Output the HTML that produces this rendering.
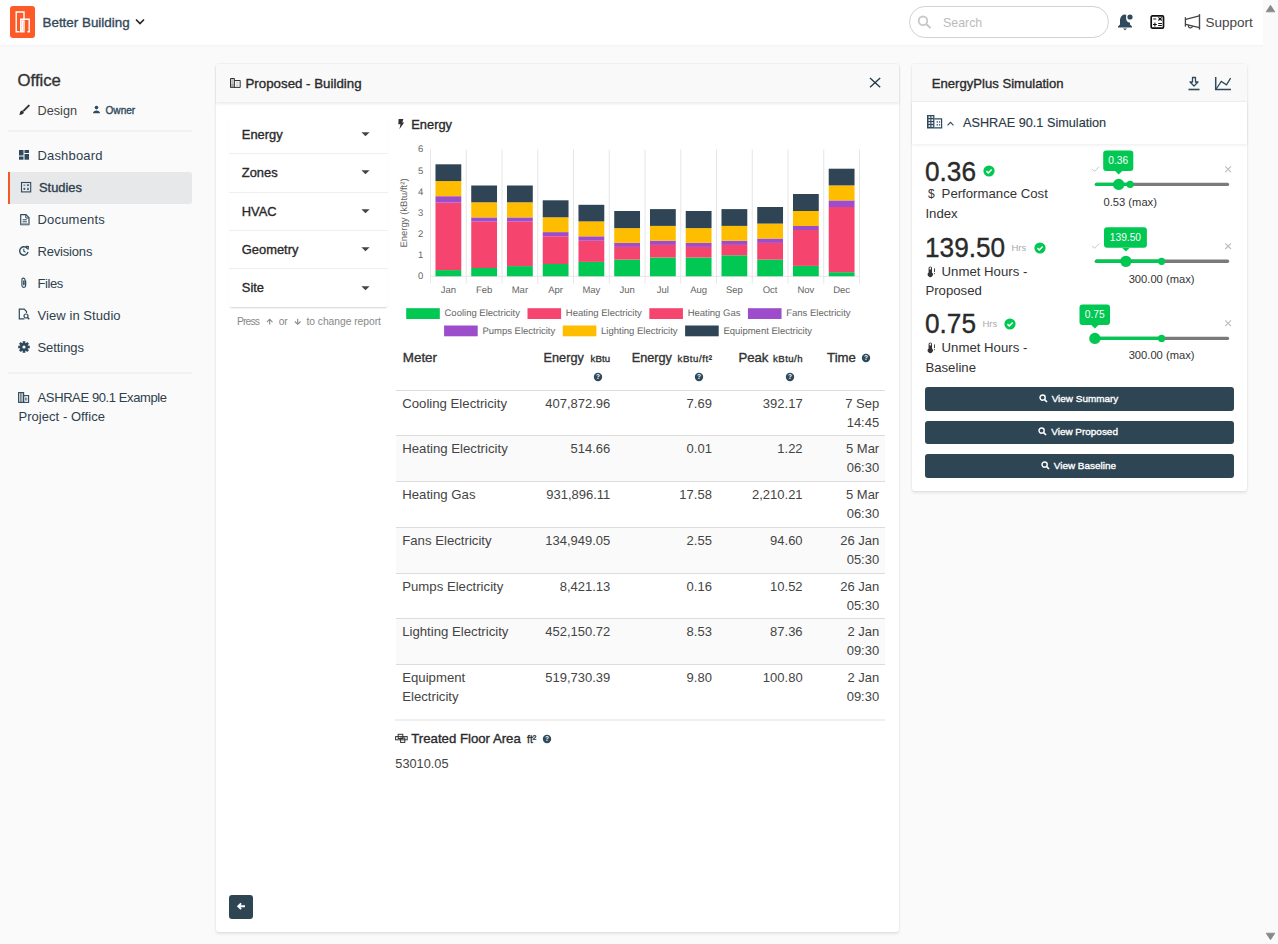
<!DOCTYPE html><html><head><meta charset="utf-8"><style>
*{margin:0;padding:0;box-sizing:border-box}
html,body{width:1278px;height:944px;overflow:hidden;background:#fafafa;font-family:"Liberation Sans",sans-serif;}
.t{position:absolute;white-space:nowrap}
.a{position:absolute}
svg{position:absolute;overflow:visible}
</style></head><body>
<div class="a" style="left:0;top:0;width:1263px;height:45px;background:#fff;box-shadow:0 1px 2px rgba(0,0,0,0.04)"></div>
<div class="a" style="left:10px;top:6px;width:25px;height:32px;background:#fd5a28;border-radius:3px"></div>
<svg style="left:0;top:0" width="40" height="40"><g fill="none" stroke="#fff" stroke-width="1.4"><path d="M19.5 31.8H16.2V12H24V19"/><path d="M27.5 31.8H29.2V19.2H20.7V31.8H24V21H22.3V31.8"/></g></svg>
<div class="t" style="top:15.00px;font-size:13.4px;line-height:15px;color:#33495a;-webkit-text-stroke:0.35px #33495a;left:42.5px;">Better Building</div>
<svg style="left:135px;top:18px" width="10" height="8"><path d="M1 1.5L5 5.5L9 1.5" fill="none" stroke="#222" stroke-width="1.6"/></svg>
<div class="a" style="left:909px;top:6px;width:200px;height:32px;border:1px solid #d2d2d2;border-radius:16px;background:#fff"></div>
<svg style="left:917px;top:15px" width="16" height="14"><circle cx="6" cy="5.8" r="4.3" fill="none" stroke="#c8c8c8" stroke-width="1.8"/><path d="M9.2 9L13.5 13" stroke="#c8c8c8" stroke-width="2"/></svg>
<div class="t" style="top:16.00px;font-size:12.4px;line-height:14px;color:#bbbbbb;left:943px;">Search</div>
<svg style="left:1117px;top:13px" width="18" height="19"><path d="M7.5 1.5C4.3 2 3 4.8 3 8V11.5L1 13.5V14.5H15V13.5L13 11.5V9.5C10 9.5 8.5 7 9.3 2C8.8 1.6 8.2 1.4 7.5 1.5Z" fill="#2e4a5c"/><circle cx="13" cy="4" r="2.6" fill="#2e4a5c"/><path d="M6 15.5H10L8 17.2Z" fill="#2e4a5c"/></svg>
<svg style="left:1149px;top:14px" width="17" height="16"><rect x="2.2" y="1.9" width="12.3" height="12.2" rx="1.2" fill="none" stroke="#111" stroke-width="1.7"/><path d="M4.3 4.9H7.2M9.4 3.3L12.8 6.5M12.8 3.3L9.4 6.5M4 10.5H7.8M5.9 8.4V12.4M9.2 9.5H12.9M9.2 11.5H12.9" stroke="#111" stroke-width="1.05"/><rect x="10.3" y="4.2" width="1.6" height="1.6" fill="#111"/></svg>
<svg style="left:1183px;top:13px" width="19" height="19"><path d="M2.4 4.2V13.6" stroke="#444" stroke-width="1.3"/><path d="M16.5 1.1V16.6" stroke="#444" stroke-width="1.4"/><path d="M2.8 6.4L16.3 2.9M2.8 11.3L16.3 14.6" stroke="#444" stroke-width="1.2"/><path d="M5.4 12.2A2.1 2.1 0 1 0 9.6 13.2" fill="none" stroke="#444" stroke-width="1.2"/></svg>
<div class="t" style="top:15.00px;font-size:13.5px;line-height:16px;color:#444;left:1205.5px;">Support</div>
<div class="a" style="left:1263px;top:0;width:15px;height:944px;background:#fafafa"></div>
<svg style="left:1263px;top:0" width="15" height="944"><path d="M7.5 5.3L11.8 11.8H3.2Z" fill="#888" stroke="#888" stroke-width="0.8" stroke-linejoin="round"/><path d="M7.5 939.7L11.8 933.2H3.2Z" fill="#888" stroke="#888" stroke-width="0.8" stroke-linejoin="round"/></svg>
<div class="t" style="top:71.00px;font-size:16.7px;line-height:19px;color:#333;-webkit-text-stroke:0.35px #333;left:17.6px;">Office</div>
<svg style="left:18px;top:104px" width="12" height="12"><path d="M10.8 1.6L6 6.4" stroke="#333" stroke-width="2" stroke-linecap="round"/><path d="M4.7 6.6C3 6.4 2.2 7.6 2 8.6C1.9 9.6 1.5 10.4 1.2 10.8C2.6 10.9 4.6 10.6 5.4 9.6C6 8.8 6 7.4 4.7 6.6Z" fill="#333"/></svg>
<div class="t" style="top:104.00px;font-size:12.7px;line-height:15px;color:#444;left:37.5px;">Design</div>
<svg style="left:92px;top:105px" width="9" height="9"><circle cx="4.5" cy="2.6" r="1.8" fill="#2e4a5c"/><path d="M1 8.2C1 6.2 2.8 5.4 4.5 5.4S8 6.2 8 8.2Z" fill="#2e4a5c"/></svg>
<div class="t" style="top:105.00px;font-size:10.1px;line-height:12px;color:#2e4a5c;-webkit-text-stroke:0.35px #2e4a5c;left:105.5px;">Owner</div>
<div class="a" style="left:8px;top:130px;width:184px;height:2px;background:#f1f1f1"></div>
<div class="a" style="left:8px;top:172px;width:184px;height:32px;background:#e7e8ea;border-radius:0 3px 3px 0;border-left:2.5px solid #f15a24"></div>
<div class="t" style="top:148.00px;font-size:13.0px;line-height:15px;color:#2e3f4d;letter-spacing:0.163px;left:37.5px;">Dashboard</div>
<div class="t" style="top:180.00px;font-size:12.9px;line-height:15px;color:#2e3f4d;-webkit-text-stroke:0.35px #2e3f4d;letter-spacing:-0.005px;left:39px;">Studies</div>
<div class="t" style="top:212.00px;font-size:13.0px;line-height:15px;color:#2e3f4d;letter-spacing:0.194px;left:37.5px;">Documents</div>
<div class="t" style="top:244.00px;font-size:13.0px;line-height:15px;color:#2e3f4d;letter-spacing:-0.182px;left:37.5px;">Revisions</div>
<div class="t" style="top:276.00px;font-size:13.0px;line-height:15px;color:#2e3f4d;letter-spacing:-0.437px;left:37.5px;">Files</div>
<div class="t" style="top:308.00px;font-size:13.0px;line-height:15px;color:#2e3f4d;letter-spacing:0.073px;left:37.5px;">View in Studio</div>
<div class="t" style="top:340.00px;font-size:13.0px;line-height:15px;color:#2e3f4d;letter-spacing:-0.068px;left:37.5px;">Settings</div>
<svg style="left:19px;top:150px" width="11" height="10"><rect x="0" y="0" width="4.5" height="5.5" fill="#2e4a5c"/><rect x="5.5" y="0" width="4.5" height="3" fill="#2e4a5c"/><rect x="0" y="6.5" width="4.5" height="3.2" fill="#2e4a5c"/><rect x="5.5" y="4" width="4.5" height="5.7" fill="#2e4a5c"/></svg>
<svg style="left:21px;top:182px" width="11" height="11"><rect x="0.5" y="0.5" width="9.2" height="9.4" fill="none" stroke="#2e4a5c" stroke-width="1.1"/><path d="M2.4 3.2H4.3M6 2.2L7.9 4.1M7.9 2.2L6 4.1M2.2 6.9H4.5M3.35 5.8V8M6 6.3H8M6 7.6H8" stroke="#2e4a5c" stroke-width="0.85"/></svg>
<svg style="left:19.5px;top:213.5px" width="11" height="12"><path d="M0.7 0.7H6L9 3.7V10.6H0.7Z" fill="none" stroke="#2e4a5c" stroke-width="1.2" stroke-linejoin="round"/><path d="M5.8 0.8V4H9" fill="none" stroke="#2e4a5c" stroke-width="1"/><path d="M2.6 5.8H6.8M2.6 7.8H6.8" stroke="#2e4a5c" stroke-width="1"/><rect x="0.7" y="9.2" width="8.3" height="1.5" fill="#8a98a3"/></svg>
<svg style="left:18px;top:245px" width="12" height="12"><path d="M9.6 4A4.2 4.2 0 1 0 10 7" fill="none" stroke="#2e4a5c" stroke-width="1.4"/><path d="M7.5 1.3L10.3 1.5L10 4.6" fill="none" stroke="#2e4a5c" stroke-width="1.3"/><path d="M5.8 3.8V6.3L7.5 7.3" fill="none" stroke="#2e4a5c" stroke-width="1.1"/></svg>
<svg style="left:19px;top:277px" width="10" height="12"><path d="M6.7 3.5V8.5A1.9 1.9 0 0 1 2.9 8.5V2.6A1.5 1.5 0 0 1 5.9 2.6V8.2" fill="none" stroke="#2e4a5c" stroke-width="1.1"/><path d="M4.4 3.5V8.2" stroke="#2e4a5c" stroke-width="1"/></svg>
<svg style="left:18px;top:308px" width="13" height="12"><path d="M6.5 10.8H1.3V1.2H6.2L8.5 3.5V5" fill="none" stroke="#2e4a5c" stroke-width="1.2"/><circle cx="8" cy="8" r="2" fill="none" stroke="#2e4a5c" stroke-width="1.2"/><path d="M9.5 9.5L11.3 11.3" stroke="#2e4a5c" stroke-width="1.3"/></svg>
<svg style="left:18px;top:341px" width="12" height="12"><g transform="translate(6,6)"><circle r="4" fill="#2e4a5c"/><rect x="-1.3" y="-5.8" width="2.6" height="3" fill="#2e4a5c" transform="rotate(0)"/><rect x="-1.3" y="-5.8" width="2.6" height="3" fill="#2e4a5c" transform="rotate(45)"/><rect x="-1.3" y="-5.8" width="2.6" height="3" fill="#2e4a5c" transform="rotate(90)"/><rect x="-1.3" y="-5.8" width="2.6" height="3" fill="#2e4a5c" transform="rotate(135)"/><rect x="-1.3" y="-5.8" width="2.6" height="3" fill="#2e4a5c" transform="rotate(180)"/><rect x="-1.3" y="-5.8" width="2.6" height="3" fill="#2e4a5c" transform="rotate(225)"/><rect x="-1.3" y="-5.8" width="2.6" height="3" fill="#2e4a5c" transform="rotate(270)"/><rect x="-1.3" y="-5.8" width="2.6" height="3" fill="#2e4a5c" transform="rotate(315)"/><circle r="1.6" fill="#fafafa"/></g></svg>
<div class="a" style="left:8px;top:371.5px;width:184px;height:2px;background:#f1f1f1"></div>
<svg style="left:18px;top:392px" width="12" height="11"><rect x="0.6" y="0.6" width="5" height="9.8" fill="none" stroke="#2e4a5c" stroke-width="1.1"/><path d="M2.3 1V10.5M3.9 1V10.5" stroke="#2e4a5c" stroke-width="0.8"/><rect x="5.6" y="3.6" width="5" height="6.8" fill="none" stroke="#2e4a5c" stroke-width="1.1"/><path d="M7.5 5.5V8.5M8.8 5.5V8.5" stroke="#2e4a5c" stroke-width="0.7"/></svg>
<div class="t" style="top:390.00px;font-size:13.0px;line-height:15px;color:#2e3f4d;letter-spacing:-0.398px;left:37.6px;">ASHRAE 90.1 Example</div>
<div class="t" style="top:409.00px;font-size:13.0px;line-height:15px;color:#2e3f4d;letter-spacing:0.045px;left:18.5px;">Project - Office</div>
<div class="a" style="left:216px;top:64px;width:683px;height:868px;background:#fff;border-radius:3px;box-shadow:0 0 0 1px rgba(0,0,0,0.02),0 1.5px 3px rgba(0,0,0,0.09)"></div>
<div class="a" style="left:216px;top:64px;width:683px;height:38px;background:#f9f9f9;border-radius:3px 3px 0 0;box-shadow:0 1.5px 3px rgba(0,0,0,0.08)"></div>
<svg style="left:230px;top:78px" width="12" height="11"><path d="M0.5 9.5V0.5H4.4V9.5M4.4 2.5H10.2V9.4H0.4" fill="none" stroke="#333" stroke-width="1"/><path d="M1.9 1V9.2M3 1V9.2M1 6.8H4.2M1 8.3H4.2" stroke="#777" stroke-width="0.6"/><path d="M6.2 4.2H8.5M6.2 6H8.5M6.2 7.7H8.5" stroke="#aaa" stroke-width="0.7"/></svg>
<div class="t" style="top:76.00px;font-size:13.3px;line-height:15px;color:#2a2a2a;-webkit-text-stroke:0.35px #2a2a2a;left:245.5px;">Proposed - Building</div>
<svg style="left:868px;top:76px" width="14" height="14"><path d="M2 2.1L12.2 11.2M12.2 2.1L2 11.2" stroke="#1f3a4d" stroke-width="1.35"/></svg>
<div class="a" style="left:229px;top:115px;width:159px;height:192px;background:#fff;border-radius:3px;box-shadow:0 2px 2px -1px rgba(0,0,0,0.18)"></div>
<div class="t" style="top:127.00px;font-size:12.9px;line-height:15px;color:#2a2a2a;-webkit-text-stroke:0.35px #2a2a2a;left:241.8px;">Energy</div>
<svg style="left:361px;top:131.9px" width="10" height="6"><path d="M0.4 0.3H8.6L4.5 4.3Z" fill="#444"/></svg>
<div class="t" style="top:165.00px;font-size:12.9px;line-height:15px;color:#2a2a2a;-webkit-text-stroke:0.35px #2a2a2a;left:241.8px;">Zones</div>
<svg style="left:361px;top:170.3px" width="10" height="6"><path d="M0.4 0.3H8.6L4.5 4.3Z" fill="#444"/></svg>
<div class="a" style="left:229px;top:153.1px;width:159px;height:1px;background:#efefef"></div>
<div class="t" style="top:204.00px;font-size:12.9px;line-height:15px;color:#2a2a2a;-webkit-text-stroke:0.35px #2a2a2a;left:241.8px;">HVAC</div>
<svg style="left:361px;top:208.7px" width="10" height="6"><path d="M0.4 0.3H8.6L4.5 4.3Z" fill="#444"/></svg>
<div class="a" style="left:229px;top:191.5px;width:159px;height:1px;background:#efefef"></div>
<div class="t" style="top:242.00px;font-size:12.9px;line-height:15px;color:#2a2a2a;-webkit-text-stroke:0.35px #2a2a2a;left:241.8px;">Geometry</div>
<svg style="left:361px;top:247.1px" width="10" height="6"><path d="M0.4 0.3H8.6L4.5 4.3Z" fill="#444"/></svg>
<div class="a" style="left:229px;top:229.9px;width:159px;height:1px;background:#efefef"></div>
<div class="t" style="top:280.00px;font-size:12.9px;line-height:15px;color:#2a2a2a;-webkit-text-stroke:0.35px #2a2a2a;left:241.8px;">Site</div>
<svg style="left:361px;top:285.5px" width="10" height="6"><path d="M0.4 0.3H8.6L4.5 4.3Z" fill="#444"/></svg>
<div class="a" style="left:229px;top:268.3px;width:159px;height:1px;background:#efefef"></div>
<div class="t" style="top:316.00px;font-size:10.3px;line-height:12px;color:#888;letter-spacing:-0.807px;left:236.9px;">Press</div>
<div class="t" style="top:316.00px;font-size:10.3px;line-height:12px;color:#888;letter-spacing:-0.358px;left:278.8px;">or</div>
<div class="t" style="top:316.00px;font-size:10.3px;line-height:12px;color:#888;letter-spacing:-0.027px;left:306.4px;">to change report</div>
<svg style="left:265px;top:317px" width="10" height="10"><path d="M4.7 7.6V2.4M1.9 5.1L4.7 2.2L7.5 5.1" fill="none" stroke="#888" stroke-width="1.1"/></svg>
<svg style="left:292.5px;top:317px" width="10" height="10"><path d="M4.7 1.8V7M1.9 4.5L4.7 7.3L7.5 4.5" fill="none" stroke="#888" stroke-width="1.1"/></svg>
<svg style="left:397px;top:118px" width="9" height="12"><path d="M1.6 1H6.4L5.3 4.4H7.2L2.4 11.2L3.5 6.2H1.3Z" fill="#333"/></svg>
<div class="t" style="top:117.00px;font-size:12.85px;line-height:15px;color:#2a2a2a;-webkit-text-stroke:0.35px #2a2a2a;left:411.3px;">Energy</div>
<svg style="left:0;top:0" width="1278" height="944"><line x1="430.50" y1="149.5" x2="430.50" y2="283.5" stroke="#e6e6e6" stroke-width="1"/><line x1="466.25" y1="149.5" x2="466.25" y2="283.5" stroke="#e6e6e6" stroke-width="1"/><line x1="502.00" y1="149.5" x2="502.00" y2="283.5" stroke="#e6e6e6" stroke-width="1"/><line x1="537.75" y1="149.5" x2="537.75" y2="283.5" stroke="#e6e6e6" stroke-width="1"/><line x1="573.50" y1="149.5" x2="573.50" y2="283.5" stroke="#e6e6e6" stroke-width="1"/><line x1="609.25" y1="149.5" x2="609.25" y2="283.5" stroke="#e6e6e6" stroke-width="1"/><line x1="645.00" y1="149.5" x2="645.00" y2="283.5" stroke="#e6e6e6" stroke-width="1"/><line x1="680.75" y1="149.5" x2="680.75" y2="283.5" stroke="#e6e6e6" stroke-width="1"/><line x1="716.50" y1="149.5" x2="716.50" y2="283.5" stroke="#e6e6e6" stroke-width="1"/><line x1="752.25" y1="149.5" x2="752.25" y2="283.5" stroke="#e6e6e6" stroke-width="1"/><line x1="788.00" y1="149.5" x2="788.00" y2="283.5" stroke="#e6e6e6" stroke-width="1"/><line x1="823.75" y1="149.5" x2="823.75" y2="283.5" stroke="#e6e6e6" stroke-width="1"/><line x1="859.50" y1="149.5" x2="859.50" y2="283.5" stroke="#e6e6e6" stroke-width="1"/><line x1="430.5" y1="276.3" x2="859.5" y2="276.3" stroke="#e6e6e6" stroke-width="1"/><rect x="435.48" y="270.10" width="25.8" height="6.20" fill="#00c853"/><rect x="435.48" y="202.60" width="25.8" height="67.50" fill="#f5456e"/><rect x="435.48" y="196.20" width="25.8" height="6.40" fill="#9d4ccb"/><rect x="435.48" y="181.06" width="25.8" height="15.14" fill="#ffbd00"/><rect x="435.48" y="164.30" width="25.8" height="16.76" fill="#2f4555"/><rect x="471.23" y="268.00" width="25.8" height="8.30" fill="#00c853"/><rect x="471.23" y="221.60" width="25.8" height="46.40" fill="#f5456e"/><rect x="471.23" y="217.40" width="25.8" height="4.20" fill="#9d4ccb"/><rect x="471.23" y="202.30" width="25.8" height="15.10" fill="#ffbd00"/><rect x="471.23" y="185.50" width="25.8" height="16.80" fill="#2f4555"/><rect x="506.98" y="266.10" width="25.8" height="10.20" fill="#00c853"/><rect x="506.98" y="221.60" width="25.8" height="44.50" fill="#f5456e"/><rect x="506.98" y="217.40" width="25.8" height="4.20" fill="#9d4ccb"/><rect x="506.98" y="202.30" width="25.8" height="15.10" fill="#ffbd00"/><rect x="506.98" y="185.50" width="25.8" height="16.80" fill="#2f4555"/><rect x="542.73" y="264.00" width="25.8" height="12.30" fill="#00c853"/><rect x="542.73" y="236.30" width="25.8" height="27.70" fill="#f5456e"/><rect x="542.73" y="232.10" width="25.8" height="4.20" fill="#9d4ccb"/><rect x="542.73" y="217.30" width="25.8" height="14.80" fill="#ffbd00"/><rect x="542.73" y="200.30" width="25.8" height="17.00" fill="#2f4555"/><rect x="578.48" y="261.90" width="25.8" height="14.40" fill="#00c853"/><rect x="578.48" y="240.70" width="25.8" height="21.20" fill="#f5456e"/><rect x="578.48" y="236.30" width="25.8" height="4.40" fill="#9d4ccb"/><rect x="578.48" y="221.40" width="25.8" height="14.90" fill="#ffbd00"/><rect x="578.48" y="204.80" width="25.8" height="16.60" fill="#2f4555"/><rect x="614.23" y="259.60" width="25.8" height="16.70" fill="#00c853"/><rect x="614.23" y="246.90" width="25.8" height="12.70" fill="#f5456e"/><rect x="614.23" y="242.90" width="25.8" height="4.00" fill="#9d4ccb"/><rect x="614.23" y="228.10" width="25.8" height="14.80" fill="#ffbd00"/><rect x="614.23" y="211.00" width="25.8" height="17.10" fill="#2f4555"/><rect x="649.98" y="257.50" width="25.8" height="18.80" fill="#00c853"/><rect x="649.98" y="244.90" width="25.8" height="12.60" fill="#f5456e"/><rect x="649.98" y="240.70" width="25.8" height="4.20" fill="#9d4ccb"/><rect x="649.98" y="225.90" width="25.8" height="14.80" fill="#ffbd00"/><rect x="649.98" y="209.10" width="25.8" height="16.80" fill="#2f4555"/><rect x="685.73" y="257.50" width="25.8" height="18.80" fill="#00c853"/><rect x="685.73" y="246.90" width="25.8" height="10.60" fill="#f5456e"/><rect x="685.73" y="242.90" width="25.8" height="4.00" fill="#9d4ccb"/><rect x="685.73" y="228.10" width="25.8" height="14.80" fill="#ffbd00"/><rect x="685.73" y="211.00" width="25.8" height="17.10" fill="#2f4555"/><rect x="721.48" y="255.30" width="25.8" height="21.00" fill="#00c853"/><rect x="721.48" y="244.90" width="25.8" height="10.40" fill="#f5456e"/><rect x="721.48" y="240.70" width="25.8" height="4.20" fill="#9d4ccb"/><rect x="721.48" y="225.90" width="25.8" height="14.80" fill="#ffbd00"/><rect x="721.48" y="209.10" width="25.8" height="16.80" fill="#2f4555"/><rect x="757.23" y="259.60" width="25.8" height="16.70" fill="#00c853"/><rect x="757.23" y="242.90" width="25.8" height="16.70" fill="#f5456e"/><rect x="757.23" y="238.50" width="25.8" height="4.40" fill="#9d4ccb"/><rect x="757.23" y="223.60" width="25.8" height="14.90" fill="#ffbd00"/><rect x="757.23" y="207.00" width="25.8" height="16.60" fill="#2f4555"/><rect x="792.98" y="265.90" width="25.8" height="10.40" fill="#00c853"/><rect x="792.98" y="230.00" width="25.8" height="35.90" fill="#f5456e"/><rect x="792.98" y="226.00" width="25.8" height="4.00" fill="#9d4ccb"/><rect x="792.98" y="211.00" width="25.8" height="15.00" fill="#ffbd00"/><rect x="792.98" y="194.00" width="25.8" height="17.00" fill="#2f4555"/><rect x="828.73" y="272.20" width="25.8" height="4.10" fill="#00c853"/><rect x="828.73" y="207.00" width="25.8" height="65.20" fill="#f5456e"/><rect x="828.73" y="200.40" width="25.8" height="6.60" fill="#9d4ccb"/><rect x="828.73" y="185.40" width="25.8" height="15.00" fill="#ffbd00"/><rect x="828.73" y="168.70" width="25.8" height="16.70" fill="#2f4555"/><text x="423.3" y="279.10" text-anchor="end" font-size="9.5" fill="#666" font-family="Liberation Sans" text-rendering="geometricPrecision">0</text><text x="423.3" y="257.98" text-anchor="end" font-size="9.5" fill="#666" font-family="Liberation Sans" text-rendering="geometricPrecision">1</text><text x="423.3" y="236.86" text-anchor="end" font-size="9.5" fill="#666" font-family="Liberation Sans" text-rendering="geometricPrecision">2</text><text x="423.3" y="215.74" text-anchor="end" font-size="9.5" fill="#666" font-family="Liberation Sans" text-rendering="geometricPrecision">3</text><text x="423.3" y="194.62" text-anchor="end" font-size="9.5" fill="#666" font-family="Liberation Sans" text-rendering="geometricPrecision">4</text><text x="423.3" y="173.50" text-anchor="end" font-size="9.5" fill="#666" font-family="Liberation Sans" text-rendering="geometricPrecision">5</text><text x="423.3" y="152.38" text-anchor="end" font-size="9.5" fill="#666" font-family="Liberation Sans" text-rendering="geometricPrecision">6</text><text x="448.38" y="292.6" text-anchor="middle" font-size="9.5" fill="#666" font-family="Liberation Sans" text-rendering="geometricPrecision">Jan</text><text x="484.12" y="292.6" text-anchor="middle" font-size="9.5" fill="#666" font-family="Liberation Sans" text-rendering="geometricPrecision">Feb</text><text x="519.88" y="292.6" text-anchor="middle" font-size="9.5" fill="#666" font-family="Liberation Sans" text-rendering="geometricPrecision">Mar</text><text x="555.62" y="292.6" text-anchor="middle" font-size="9.5" fill="#666" font-family="Liberation Sans" text-rendering="geometricPrecision">Apr</text><text x="591.38" y="292.6" text-anchor="middle" font-size="9.5" fill="#666" font-family="Liberation Sans" text-rendering="geometricPrecision">May</text><text x="627.12" y="292.6" text-anchor="middle" font-size="9.5" fill="#666" font-family="Liberation Sans" text-rendering="geometricPrecision">Jun</text><text x="662.88" y="292.6" text-anchor="middle" font-size="9.5" fill="#666" font-family="Liberation Sans" text-rendering="geometricPrecision">Jul</text><text x="698.62" y="292.6" text-anchor="middle" font-size="9.5" fill="#666" font-family="Liberation Sans" text-rendering="geometricPrecision">Aug</text><text x="734.38" y="292.6" text-anchor="middle" font-size="9.5" fill="#666" font-family="Liberation Sans" text-rendering="geometricPrecision">Sep</text><text x="770.12" y="292.6" text-anchor="middle" font-size="9.5" fill="#666" font-family="Liberation Sans" text-rendering="geometricPrecision">Oct</text><text x="805.88" y="292.6" text-anchor="middle" font-size="9.5" fill="#666" font-family="Liberation Sans" text-rendering="geometricPrecision">Nov</text><text x="841.62" y="292.6" text-anchor="middle" font-size="9.5" fill="#666" font-family="Liberation Sans" text-rendering="geometricPrecision">Dec</text><text transform="translate(406.5,213) rotate(-90)" text-anchor="middle" font-size="9.5" fill="#666" font-family="Liberation Sans" text-rendering="geometricPrecision">Energy (kBtu/ft²)</text><rect x="406.20" y="308.20" width="33.6" height="10.8" fill="#00c853"/><text x="444.50" y="316.20" font-size="9.5" fill="#666" font-family="Liberation Sans" text-rendering="geometricPrecision">Cooling Electricity</text><rect x="527.50" y="308.20" width="33.6" height="10.8" fill="#f5456e"/><text x="565.80" y="316.20" font-size="9.5" fill="#666" font-family="Liberation Sans" text-rendering="geometricPrecision">Heating Electricity</text><rect x="649.33" y="308.20" width="33.6" height="10.8" fill="#f5456e"/><text x="687.63" y="316.20" font-size="9.5" fill="#666" font-family="Liberation Sans" text-rendering="geometricPrecision">Heating Gas</text><rect x="747.93" y="308.20" width="33.6" height="10.8" fill="#9d4ccb"/><text x="786.23" y="316.20" font-size="9.5" fill="#666" font-family="Liberation Sans" text-rendering="geometricPrecision">Fans Electricity</text><rect x="444.10" y="325.50" width="33.6" height="10.8" fill="#9d4ccb"/><text x="482.40" y="333.50" font-size="9.5" fill="#666" font-family="Liberation Sans" text-rendering="geometricPrecision">Pumps Electricity</text><rect x="562.75" y="325.50" width="33.6" height="10.8" fill="#ffbd00"/><text x="601.05" y="333.50" font-size="9.5" fill="#666" font-family="Liberation Sans" text-rendering="geometricPrecision">Lighting Electricity</text><rect x="685.11" y="325.50" width="33.6" height="10.8" fill="#2f4555"/><text x="723.41" y="333.50" font-size="9.5" fill="#666" font-family="Liberation Sans" text-rendering="geometricPrecision">Equipment Electricity</text></svg>
<div class="t" style="top:350.00px;font-size:13.4px;line-height:15px;color:#333;-webkit-text-stroke:0.35px #333;left:402.8px;">Meter</div>
<div class="t" style="top:351.00px;font-size:12.7px;line-height:15px;color:#333;-webkit-text-stroke:0.35px #333;left:543.6px;">Energy</div>
<div class="t" style="top:353.00px;font-size:9.6px;line-height:11px;color:#333;-webkit-text-stroke:0.35px #333;letter-spacing:0.13px;left:590.5px;">kBtu</div>
<svg style="left:591.8px;top:371.2px" width="12" height="12"><circle cx="6" cy="6" r="4.2" fill="#2e4a5c"/><text x="6" y="8.2" text-anchor="middle" font-size="6.5" font-weight="700" fill="#fff" font-family="Liberation Sans">?</text></svg>
<div class="t" style="top:351.00px;font-size:12.7px;line-height:15px;color:#333;-webkit-text-stroke:0.35px #333;left:631.7px;">Energy</div>
<div class="t" style="top:353.00px;font-size:9.6px;line-height:11px;color:#333;-webkit-text-stroke:0.35px #333;letter-spacing:0.585px;left:677.5px;">kBtu/ft²</div>
<svg style="left:693.3px;top:371.2px" width="12" height="12"><circle cx="6" cy="6" r="4.2" fill="#2e4a5c"/><text x="6" y="8.2" text-anchor="middle" font-size="6.5" font-weight="700" fill="#fff" font-family="Liberation Sans">?</text></svg>
<div class="t" style="top:350.00px;font-size:13.2px;line-height:15px;color:#333;-webkit-text-stroke:0.35px #333;left:738.4px;">Peak</div>
<div class="t" style="top:353.00px;font-size:9.6px;line-height:11px;color:#333;-webkit-text-stroke:0.35px #333;letter-spacing:0.477px;left:773px;">kBtu/h</div>
<svg style="left:784.0px;top:371.2px" width="12" height="12"><circle cx="6" cy="6" r="4.2" fill="#2e4a5c"/><text x="6" y="8.2" text-anchor="middle" font-size="6.5" font-weight="700" fill="#fff" font-family="Liberation Sans">?</text></svg>
<div class="t" style="top:350.00px;font-size:13.2px;line-height:15px;color:#333;-webkit-text-stroke:0.35px #333;left:827.1px;">Time</div>
<svg style="left:860.2px;top:352.0px" width="12" height="12"><circle cx="6" cy="6" r="4.2" fill="#2e4a5c"/><text x="6" y="8.2" text-anchor="middle" font-size="6.5" font-weight="700" fill="#fff" font-family="Liberation Sans">?</text></svg>
<div class="a" style="left:396px;top:390px;width:489px;height:1px;background:#dcdcdc"></div>
<div class="t" style="top:396.00px;font-size:13.2px;line-height:15px;color:#444;left:402.2px;">Cooling Electricity</div>
<div class="t" style="top:396.00px;font-size:13px;line-height:15px;color:#444;right:667.7px;text-align:right;">407,872.96</div>
<div class="t" style="top:396.00px;font-size:13px;line-height:15px;color:#444;right:566.1px;text-align:right;">7.69</div>
<div class="t" style="top:396.00px;font-size:13px;line-height:15px;color:#444;right:475.4px;text-align:right;">392.17</div>
<div class="t" style="top:396.00px;font-size:13px;line-height:15px;color:#444;right:398.79999999999995px;text-align:right;">7 Sep</div>
<div class="t" style="top:415.00px;font-size:13px;line-height:15px;color:#444;right:398.79999999999995px;text-align:right;">14:45</div>
<div class="a" style="left:396px;top:435.00px;width:489px;height:46.00px;background:#fafafa"></div>
<div class="a" style="left:396px;top:435px;width:489px;height:1px;background:#dcdcdc"></div>
<div class="t" style="top:441.00px;font-size:13.2px;line-height:15px;color:#444;left:402.2px;">Heating Electricity</div>
<div class="t" style="top:441.00px;font-size:13px;line-height:15px;color:#444;right:667.7px;text-align:right;">514.66</div>
<div class="t" style="top:441.00px;font-size:13px;line-height:15px;color:#444;right:566.1px;text-align:right;">0.01</div>
<div class="t" style="top:441.00px;font-size:13px;line-height:15px;color:#444;right:475.4px;text-align:right;">1.22</div>
<div class="t" style="top:441.00px;font-size:13px;line-height:15px;color:#444;right:398.79999999999995px;text-align:right;">5 Mar</div>
<div class="t" style="top:460.00px;font-size:13px;line-height:15px;color:#444;right:398.79999999999995px;text-align:right;">06:30</div>
<div class="a" style="left:396px;top:481px;width:489px;height:1px;background:#dcdcdc"></div>
<div class="t" style="top:487.00px;font-size:13.2px;line-height:15px;color:#444;left:402.2px;">Heating Gas</div>
<div class="t" style="top:487.00px;font-size:13px;line-height:15px;color:#444;right:667.7px;text-align:right;">931,896.11</div>
<div class="t" style="top:487.00px;font-size:13px;line-height:15px;color:#444;right:566.1px;text-align:right;">17.58</div>
<div class="t" style="top:487.00px;font-size:13px;line-height:15px;color:#444;right:475.4px;text-align:right;">2,210.21</div>
<div class="t" style="top:487.00px;font-size:13px;line-height:15px;color:#444;right:398.79999999999995px;text-align:right;">5 Mar</div>
<div class="t" style="top:506.00px;font-size:13px;line-height:15px;color:#444;right:398.79999999999995px;text-align:right;">06:30</div>
<div class="a" style="left:396px;top:527.00px;width:489px;height:46.00px;background:#fafafa"></div>
<div class="a" style="left:396px;top:527px;width:489px;height:1px;background:#dcdcdc"></div>
<div class="t" style="top:533.00px;font-size:13.2px;line-height:15px;color:#444;left:402.2px;">Fans Electricity</div>
<div class="t" style="top:533.00px;font-size:13px;line-height:15px;color:#444;right:667.7px;text-align:right;">134,949.05</div>
<div class="t" style="top:533.00px;font-size:13px;line-height:15px;color:#444;right:566.1px;text-align:right;">2.55</div>
<div class="t" style="top:533.00px;font-size:13px;line-height:15px;color:#444;right:475.4px;text-align:right;">94.60</div>
<div class="t" style="top:533.00px;font-size:13px;line-height:15px;color:#444;right:398.79999999999995px;text-align:right;">26 Jan</div>
<div class="t" style="top:552.00px;font-size:13px;line-height:15px;color:#444;right:398.79999999999995px;text-align:right;">05:30</div>
<div class="a" style="left:396px;top:573px;width:489px;height:1px;background:#dcdcdc"></div>
<div class="t" style="top:579.00px;font-size:13.2px;line-height:15px;color:#444;left:402.2px;">Pumps Electricity</div>
<div class="t" style="top:579.00px;font-size:13px;line-height:15px;color:#444;right:667.7px;text-align:right;">8,421.13</div>
<div class="t" style="top:579.00px;font-size:13px;line-height:15px;color:#444;right:566.1px;text-align:right;">0.16</div>
<div class="t" style="top:579.00px;font-size:13px;line-height:15px;color:#444;right:475.4px;text-align:right;">10.52</div>
<div class="t" style="top:579.00px;font-size:13px;line-height:15px;color:#444;right:398.79999999999995px;text-align:right;">26 Jan</div>
<div class="t" style="top:598.00px;font-size:13px;line-height:15px;color:#444;right:398.79999999999995px;text-align:right;">05:30</div>
<div class="a" style="left:396px;top:618.00px;width:489px;height:46.00px;background:#fafafa"></div>
<div class="a" style="left:396px;top:618px;width:489px;height:1px;background:#dcdcdc"></div>
<div class="t" style="top:624.00px;font-size:13.2px;line-height:15px;color:#444;left:402.2px;">Lighting Electricity</div>
<div class="t" style="top:624.00px;font-size:13px;line-height:15px;color:#444;right:667.7px;text-align:right;">452,150.72</div>
<div class="t" style="top:624.00px;font-size:13px;line-height:15px;color:#444;right:566.1px;text-align:right;">8.53</div>
<div class="t" style="top:624.00px;font-size:13px;line-height:15px;color:#444;right:475.4px;text-align:right;">87.36</div>
<div class="t" style="top:624.00px;font-size:13px;line-height:15px;color:#444;right:398.79999999999995px;text-align:right;">2 Jan</div>
<div class="t" style="top:643.00px;font-size:13px;line-height:15px;color:#444;right:398.79999999999995px;text-align:right;">09:30</div>
<div class="a" style="left:396px;top:664px;width:489px;height:1px;background:#dcdcdc"></div>
<div class="t" style="top:670.00px;font-size:13.2px;line-height:15px;color:#444;left:402.2px;">Equipment</div>
<div class="t" style="top:689.00px;font-size:13.2px;line-height:15px;color:#444;left:402.2px;">Electricity</div>
<div class="t" style="top:670.00px;font-size:13px;line-height:15px;color:#444;right:667.7px;text-align:right;">519,730.39</div>
<div class="t" style="top:670.00px;font-size:13px;line-height:15px;color:#444;right:566.1px;text-align:right;">9.80</div>
<div class="t" style="top:670.00px;font-size:13px;line-height:15px;color:#444;right:475.4px;text-align:right;">100.80</div>
<div class="t" style="top:670.00px;font-size:13px;line-height:15px;color:#444;right:398.79999999999995px;text-align:right;">2 Jan</div>
<div class="t" style="top:689.00px;font-size:13px;line-height:15px;color:#444;right:398.79999999999995px;text-align:right;">09:30</div>
<div class="a" style="left:395px;top:719px;width:490px;height:2px;background:#efefef"></div>
<svg style="left:395px;top:733px" width="14" height="11"><rect x="3.2" y="1.3" width="4.6" height="4.2" fill="none" stroke="#333" stroke-width="1"/><rect x="0.6" y="3.6" width="11.6" height="3.2" fill="none" stroke="#333" stroke-width="1"/><rect x="5.6" y="5" width="4.2" height="4.4" fill="none" stroke="#333" stroke-width="1"/></svg>
<div class="t" style="top:731.00px;font-size:13.2px;line-height:15px;color:#2a2a2a;-webkit-text-stroke:0.35px #2a2a2a;left:411.3px;">Treated Floor Area</div>
<div class="t" style="top:733.00px;font-size:10.5px;line-height:12px;color:#333;-webkit-text-stroke:0.35px #333;left:527px;">ft²</div>
<svg style="left:541.0px;top:733.0px" width="12" height="12"><circle cx="6" cy="6" r="4.2" fill="#2e4a5c"/><text x="6" y="8.2" text-anchor="middle" font-size="6.5" font-weight="700" fill="#fff" font-family="Liberation Sans">?</text></svg>
<div class="t" style="top:756.00px;font-size:12.75px;line-height:15px;color:#444;left:395.3px;">53010.05</div>
<div class="a" style="left:229px;top:895px;width:24px;height:24px;background:#2e4554;border-radius:3px"></div>
<svg style="left:235px;top:901px" width="12" height="12"><path d="M3.5 5.3H10M6.1 2.4L3.2 5.3L6.1 8.2" fill="none" stroke="#fff" stroke-width="1.9"/></svg>
<div class="a" style="left:912px;top:64px;width:335px;height:426.5px;background:#fff;border-radius:3px;box-shadow:0 0 0 1px rgba(0,0,0,0.02),0 1.5px 3px rgba(0,0,0,0.09)"></div>
<div class="a" style="left:912px;top:64px;width:335px;height:38px;background:#f9f9f9;border-radius:3px 3px 0 0"></div>
<div class="t" style="top:76.00px;font-size:13.1px;line-height:15px;color:#2a2a2a;-webkit-text-stroke:0.35px #2a2a2a;left:931.8px;">EnergyPlus Simulation</div>
<svg style="left:1187px;top:76px" width="15" height="16"><path d="M5.5 1.5H8.5V6H11L7 10L3 6H5.5Z" fill="none" stroke="#2e4a5c" stroke-width="1.3" stroke-linejoin="round"/><path d="M1.5 13.5H12.5" stroke="#2e4a5c" stroke-width="1.6"/></svg>
<svg style="left:1213px;top:76px" width="19" height="16"><path d="M2.7 0.9V13.6H18" fill="none" stroke="#2e4a5c" stroke-width="1.5"/><path d="M3.2 13L8.3 5.4L13.5 8.9L17.6 2.1" fill="none" stroke="#2e4a5c" stroke-width="1.3"/></svg>
<div class="a" style="left:912px;top:102px;width:335px;height:42px;background:#fff;box-shadow:0 1px 3px rgba(0,0,0,0.08),0 -1px 1px rgba(0,0,0,0.03)"></div>
<svg style="left:926.7px;top:115px" width="16" height="14"><rect x="0" y="0" width="7.4" height="13.5" fill="#2e4a5c"/><rect x="1.5" y="1.3" width="1.8" height="1.6" fill="#fff"/><rect x="1.5" y="4.3" width="1.8" height="1.6" fill="#fff"/><rect x="1.5" y="7.2" width="1.8" height="1.6" fill="#fff"/><rect x="1.5" y="10.2" width="1.8" height="1.6" fill="#fff"/><rect x="4.4" y="1.3" width="1.8" height="1.6" fill="#fff"/><rect x="4.4" y="4.3" width="1.8" height="1.6" fill="#fff"/><rect x="4.4" y="7.2" width="1.8" height="1.6" fill="#fff"/><rect x="4.4" y="10.2" width="1.8" height="1.6" fill="#fff"/><path d="M7.4 3.8H14.6V12.9H7.4" fill="none" stroke="#2e4a5c" stroke-width="1.2"/><rect x="9.6" y="6.3" width="1.3" height="1.3" fill="#2e4a5c"/><rect x="9.6" y="9.2" width="1.3" height="1.3" fill="#2e4a5c"/><rect x="11.9" y="6.3" width="1.3" height="1.3" fill="#2e4a5c"/><rect x="11.9" y="9.2" width="1.3" height="1.3" fill="#2e4a5c"/></svg>
<svg style="left:946px;top:120px" width="9" height="7"><path d="M1.5 5.3L4.5 2.3L7.5 5.3" fill="none" stroke="#2e4a5c" stroke-width="1.1"/></svg>
<div class="t" style="top:116.00px;font-size:12.7px;line-height:15px;color:#2a3a46;-webkit-text-stroke:0.15px #2a3a46;left:963px;">ASHRAE 90.1 Simulation</div>
<div class="t" style="top:157.00px;font-size:26.2px;line-height:30px;color:#2a2a2a;-webkit-text-stroke:0.35px #2a2a2a;left:925.0px;transform:scaleY(1.055);transform-origin:0 23px;">0.36</div>
<svg style="left:981.5px;top:163.5px" width="14" height="14"><circle cx="7" cy="7" r="5.6" fill="#00c853"/><path d="M4.4 7.1L6.3 8.9L9.7 5.4" fill="none" stroke="#fff" stroke-width="1.5"/></svg>
<div class="t" style="top:187.00px;font-size:12px;line-height:14px;color:#333;left:928px;">$</div>
<div class="t" style="top:186.00px;font-size:13.2px;line-height:15px;color:#333;left:941.6px;">Performance Cost</div>
<div class="t" style="top:206.00px;font-size:13.2px;line-height:15px;color:#333;left:925.4px;">Index</div>
<div class="t" style="top:233.00px;font-size:26.2px;line-height:30px;color:#2a2a2a;-webkit-text-stroke:0.35px #2a2a2a;left:925.0px;transform:scaleY(1.055);transform-origin:0 23px;">139.50</div>
<div class="t" style="top:242.00px;font-size:9.5px;line-height:11px;color:#aaa;left:1011.5px;">Hrs</div>
<svg style="left:1032.5px;top:240.5px" width="14" height="14"><circle cx="7" cy="7" r="5.6" fill="#00c853"/><path d="M4.4 7.1L6.3 8.9L9.7 5.4" fill="none" stroke="#fff" stroke-width="1.5"/></svg>
<svg style="left:926px;top:264.6px" width="12" height="13"><path d="M2.6 3.1A1.7 1.7 0 0 1 6 3.1V7.4A2.6 2.6 0 1 1 2.6 7.4Z" fill="#333"/><ellipse cx="4.3" cy="3.4" rx="0.75" ry="1.2" fill="#fff"/><path d="M8.5 3.4V7.1" stroke="#333" stroke-width="0.9"/><path d="M8.5 8.2V9.2" stroke="#333" stroke-width="0.9"/></svg>
<div class="t" style="top:264.00px;font-size:13.2px;line-height:15px;color:#333;left:941.6px;">Unmet Hours -</div>
<div class="t" style="top:283.00px;font-size:13.2px;line-height:15px;color:#333;left:925.4px;">Proposed</div>
<div class="t" style="top:309.00px;font-size:26.2px;line-height:30px;color:#2a2a2a;-webkit-text-stroke:0.35px #2a2a2a;left:925.0px;transform:scaleY(1.055);transform-origin:0 23px;">0.75</div>
<div class="t" style="top:318.00px;font-size:9.5px;line-height:11px;color:#aaa;left:982.5px;">Hrs</div>
<svg style="left:1003.4px;top:317.3px" width="14" height="14"><circle cx="7" cy="7" r="5.6" fill="#00c853"/><path d="M4.4 7.1L6.3 8.9L9.7 5.4" fill="none" stroke="#fff" stroke-width="1.5"/></svg>
<svg style="left:926px;top:341.4px" width="12" height="13"><path d="M2.6 3.1A1.7 1.7 0 0 1 6 3.1V7.4A2.6 2.6 0 1 1 2.6 7.4Z" fill="#333"/><ellipse cx="4.3" cy="3.4" rx="0.75" ry="1.2" fill="#fff"/><path d="M8.5 3.4V7.1" stroke="#333" stroke-width="0.9"/><path d="M8.5 8.2V9.2" stroke="#333" stroke-width="0.9"/></svg>
<div class="t" style="top:340.00px;font-size:13.2px;line-height:15px;color:#333;left:941.6px;">Unmet Hours -</div>
<div class="t" style="top:360.00px;font-size:13.2px;line-height:15px;color:#333;left:925.4px;">Baseline</div>
<svg style="left:0;top:0" width="1278" height="944"><line x1="1096.5" y1="184.4" x2="1227.5" y2="184.4" stroke="#7a7a7a" stroke-width="3.4" stroke-linecap="round"/><line x1="1096.5" y1="184.4" x2="1130.1" y2="184.4" stroke="#00c853" stroke-width="3.4" stroke-linecap="round"/><circle cx="1130.1" cy="184.4" r="3.6" fill="#00c853"/><circle cx="1118.7" cy="184.8" r="5.8" fill="rgba(0,0,0,0.12)"/><circle cx="1118.7" cy="184.4" r="5.6" fill="#00c853"/><rect x="1103.2" y="150.4" width="30.09999999999991" height="20.5" rx="3" fill="#00c853"/><path d="M1115.1000000000001 171.0L1118.7 174.6L1122.3 171.0Z" fill="#00c853"/><text x="1118.25" y="163.8" text-anchor="middle" font-size="10.2" fill="#fff" font-family="Liberation Sans">0.36</text><path d="M1092 168.9L1094.5 171.4L1099.3 166.6" fill="none" stroke="#c8c8c8" stroke-width="1"/><path d="M1225.3 166.4L1231 172.1M1231 166.4L1225.3 172.1" fill="none" stroke="#bbb" stroke-width="1.1"/></svg>
<div class="t" style="top:196.00px;font-size:11.2px;line-height:13px;color:#333;left:830.2px;width:600px;text-align:center;">0.53 (max)</div>
<svg style="left:0;top:0" width="1278" height="944"><line x1="1096.5" y1="261.3" x2="1227.5" y2="261.3" stroke="#7a7a7a" stroke-width="3.4" stroke-linecap="round"/><line x1="1096.5" y1="261.3" x2="1161.6" y2="261.3" stroke="#00c853" stroke-width="3.4" stroke-linecap="round"/><circle cx="1161.6" cy="261.3" r="3.6" fill="#00c853"/><circle cx="1125.9" cy="261.7" r="5.8" fill="rgba(0,0,0,0.12)"/><circle cx="1125.9" cy="261.3" r="5.6" fill="#00c853"/><rect x="1104" y="227.3" width="42.90000000000009" height="20.5" rx="3" fill="#00c853"/><path d="M1122.3000000000002 247.9L1125.9 251.5L1129.5 247.9Z" fill="#00c853"/><text x="1125.45" y="240.70000000000002" text-anchor="middle" font-size="10.2" fill="#fff" font-family="Liberation Sans">139.50</text><path d="M1092 245.8L1094.5 248.3L1099.3 243.5" fill="none" stroke="#c8c8c8" stroke-width="1"/><path d="M1225.3 243.3L1231 249.0M1231 243.3L1225.3 249.0" fill="none" stroke="#bbb" stroke-width="1.1"/></svg>
<div class="t" style="top:273.00px;font-size:11.2px;line-height:13px;color:#333;left:861.5999999999999px;width:600px;text-align:center;">300.00 (max)</div>
<svg style="left:0;top:0" width="1278" height="944"><line x1="1096.5" y1="338.4" x2="1227.5" y2="338.4" stroke="#7a7a7a" stroke-width="3.4" stroke-linecap="round"/><line x1="1096.5" y1="338.4" x2="1161.6" y2="338.4" stroke="#00c853" stroke-width="3.4" stroke-linecap="round"/><circle cx="1161.6" cy="338.4" r="3.6" fill="#00c853"/><circle cx="1094.9" cy="338.79999999999995" r="5.8" fill="rgba(0,0,0,0.12)"/><circle cx="1094.9" cy="338.4" r="5.6" fill="#00c853"/><rect x="1079.5" y="304.4" width="30.5" height="20.5" rx="3" fill="#00c853"/><path d="M1091.3000000000002 325.0L1094.9 328.59999999999997L1098.5 325.0Z" fill="#00c853"/><text x="1094.75" y="317.79999999999995" text-anchor="middle" font-size="10.2" fill="#fff" font-family="Liberation Sans">0.75</text><path d="M1225.3 320.4L1231 326.09999999999997M1231 320.4L1225.3 326.09999999999997" fill="none" stroke="#bbb" stroke-width="1.1"/></svg>
<div class="t" style="top:349.00px;font-size:11.2px;line-height:13px;color:#333;left:861.5999999999999px;width:600px;text-align:center;">300.00 (max)</div>
<div class="a" style="left:925.2px;top:387.2px;width:308.6px;height:23.5px;background:#2e4554;border-radius:3px"></div>
<svg style="left:1038.7px;top:393.8px" width="10" height="10"><circle cx="3.6" cy="3.6" r="2.6" fill="none" stroke="#fff" stroke-width="1.4"/><path d="M5.5 5.5L8 8" stroke="#fff" stroke-width="1.7"/></svg>
<div class="t" style="top:393.00px;font-size:9.95px;line-height:11px;color:#fff;-webkit-text-stroke:0.35px #fff;left:1051.65px;">View Summary</div>
<div class="a" style="left:925.2px;top:420.7px;width:308.6px;height:23.5px;background:#2e4554;border-radius:3px"></div>
<svg style="left:1038.2px;top:427.3px" width="10" height="10"><circle cx="3.6" cy="3.6" r="2.6" fill="none" stroke="#fff" stroke-width="1.4"/><path d="M5.5 5.5L8 8" stroke="#fff" stroke-width="1.7"/></svg>
<div class="t" style="top:426.00px;font-size:9.95px;line-height:11px;color:#fff;-webkit-text-stroke:0.35px #fff;left:1051.25px;">View Proposed</div>
<div class="a" style="left:925.2px;top:454.2px;width:308.6px;height:23.5px;background:#2e4554;border-radius:3px"></div>
<svg style="left:1040.8px;top:460.8px" width="10" height="10"><circle cx="3.6" cy="3.6" r="2.6" fill="none" stroke="#fff" stroke-width="1.4"/><path d="M5.5 5.5L8 8" stroke="#fff" stroke-width="1.7"/></svg>
<div class="t" style="top:460.00px;font-size:9.95px;line-height:11px;color:#fff;-webkit-text-stroke:0.35px #fff;left:1053.75px;">View Baseline</div>
</body></html>
